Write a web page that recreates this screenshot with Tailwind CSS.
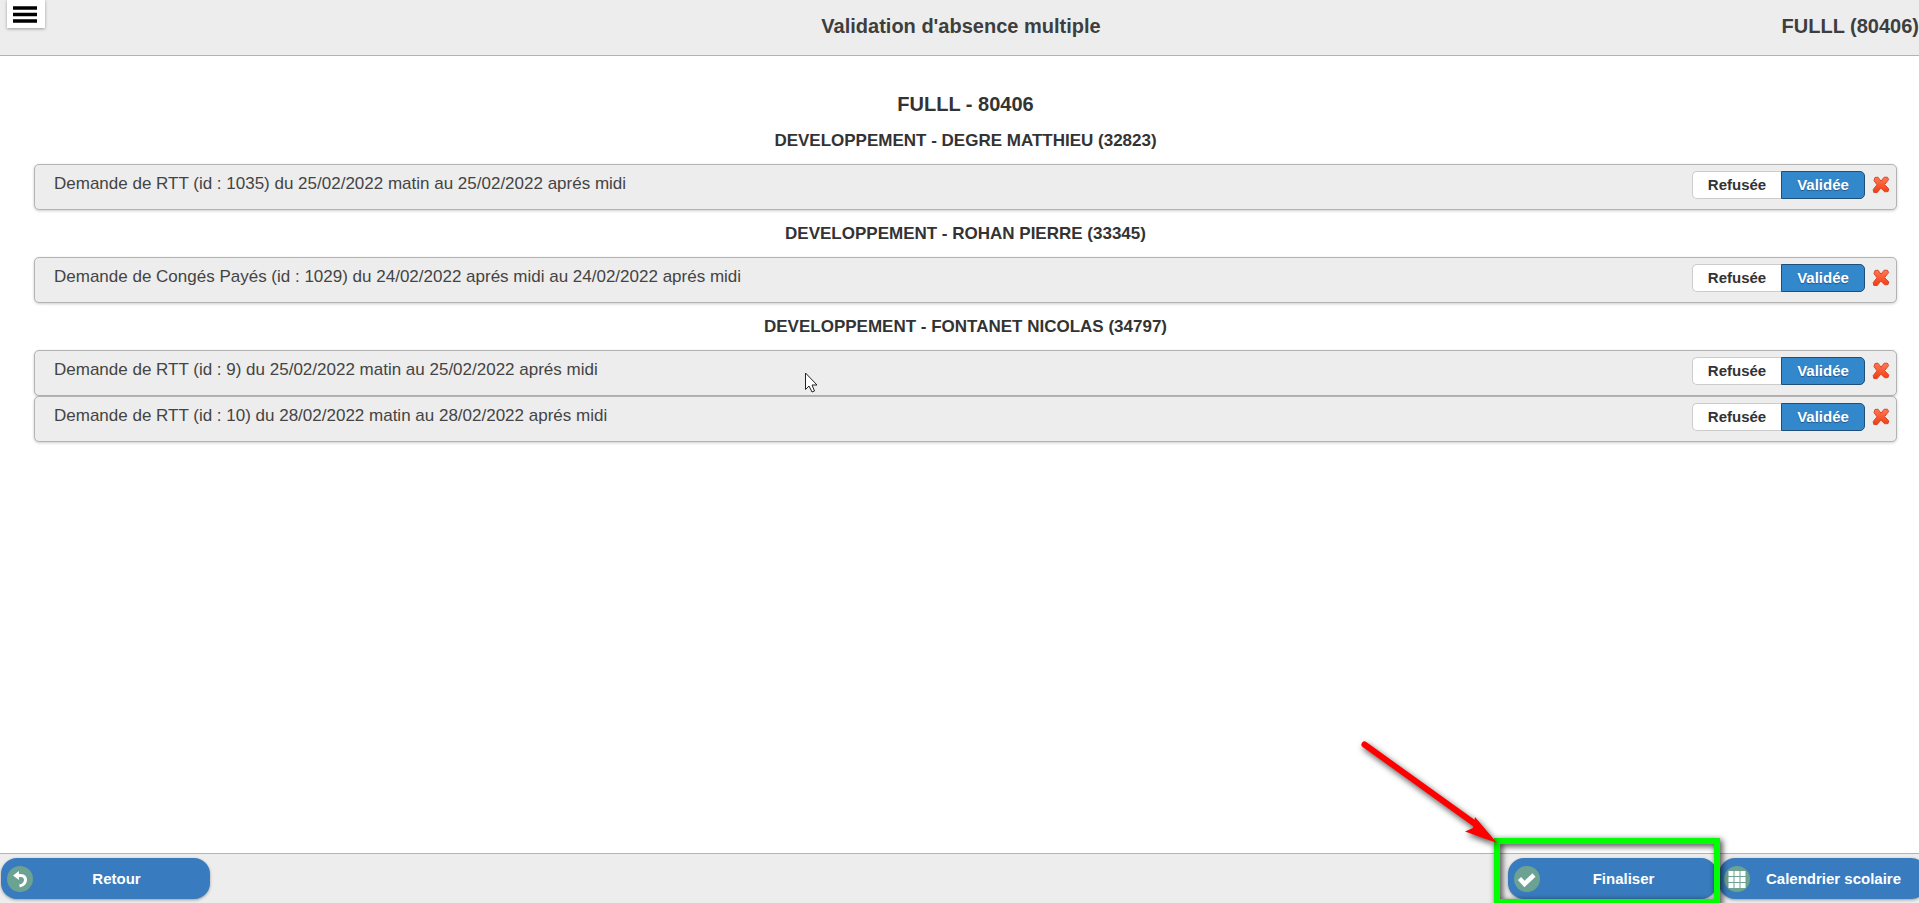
<!DOCTYPE html>
<html lang="fr">
<head>
<meta charset="utf-8">
<title>Validation d'absence multiple</title>
<script src="https://cdn.jsdelivr.net/npm/@tailwindcss/browser@4"></script>
</head>
<body class="relative flex h-screen flex-col overflow-hidden bg-white font-['Liberation_Sans',Arial,sans-serif] text-[#333333]">

<svg class="absolute size-0" aria-hidden="true">
  <defs>
    <linearGradient id="red" x1="0" y1="0" x2="0" y2="1"><stop offset="0" stop-color="#ff7a55"/><stop offset="1" stop-color="#f23c10"/></linearGradient>
    <symbol id="cross" viewBox="0 0 18 18">
      <path d="M3 1.500L6 1.200L9 5.200L12.200 1.200L15.500 1.300L16.600 3.600L12.600 8.600L16.800 13L16 15.600L12.600 15.800L8.800 12L5.200 16.600L1.800 16.400L1.200 13.600L5 8.800L2 4.600Z" fill="url(#red)" stroke="#d9472a" stroke-width="1" stroke-linejoin="round"/>
    </symbol>
  </defs>
</svg>

<header class="flex h-14 shrink-0 items-start border-b border-[#b3b3b3] bg-[#ededed]">
  <div class="flex flex-1 pl-[7px]">
    <button type="button" aria-label="Menu" class="flex h-7 w-[38px] items-center bg-white pl-1.5 shadow-[0_1px_3px_rgba(0,0,0,0.35)]">
      <svg width="24" height="17" viewBox="0 0 24 17"><path d="M0 2h24M0 8.500h24M0 15h24" stroke="#000" stroke-width="3.600"/></svg>
    </button>
  </div>
  <h1 class="pt-3 pr-1 text-xl leading-7 font-bold text-[#3e3e3e]">Validation d'absence multiple</h1>
  <div class="flex-1 pt-3 text-right text-xl leading-7 font-bold whitespace-nowrap text-[#3e3e3e]">FULLL (80406)</div>
</header>

<main class="flex-1 pt-8 pr-[22px] pl-[34px]">
  <h2 class="py-0.5 text-center text-xl leading-7 font-bold">FULLL - 80406</h2>

  <section>
    <h3 class="pt-[9px] pb-[11px] text-center text-[17px] leading-6 font-bold">DEVELOPPEMENT - DEGRE MATTHIEU (32823)</h3>
    <div class="flex h-[46px] items-start rounded-[5px] border border-[#b3b3b3] bg-[#ededed] pt-1.5 pr-1.5 pl-[19px] shadow-[0_1px_3px_rgba(0,0,0,0.2)]">
      <p class="flex-1 pt-px text-[17px] leading-6 text-[#444444]">Demande de RTT (id : 1035) du 25/02/2022 matin au 25/02/2022 aprés midi</p>
      <div class="flex h-7 text-[15px] font-bold">
        <button type="button" class="w-[89px] rounded-l-[5px] border border-r-0 border-[#cccccc] bg-white">Refusée</button>
        <button type="button" class="w-[84px] rounded-r-[5px] border border-[#1f4f79] bg-[#3388cc] text-white [text-shadow:0_1px_1px_#225588]">Validée</button>
      </div>
      <button type="button" aria-label="Supprimer" class="ml-[7px] flex h-7 items-center"><svg class="size-[18px]"><use href="#cross"/></svg></button>
    </div>
  </section>

  <section>
    <h3 class="py-[11px] pt-3 text-center text-[17px] leading-6 font-bold">DEVELOPPEMENT - ROHAN PIERRE (33345)</h3>
    <div class="flex h-[46px] items-start rounded-[5px] border border-[#b3b3b3] bg-[#ededed] pt-1.5 pr-1.5 pl-[19px] shadow-[0_1px_3px_rgba(0,0,0,0.2)]">
      <p class="flex-1 pt-px text-[17px] leading-6 text-[#444444]">Demande de Congés Payés (id : 1029) du 24/02/2022 aprés midi au 24/02/2022 aprés midi</p>
      <div class="flex h-7 text-[15px] font-bold">
        <button type="button" class="w-[89px] rounded-l-[5px] border border-r-0 border-[#cccccc] bg-white">Refusée</button>
        <button type="button" class="w-[84px] rounded-r-[5px] border border-[#1f4f79] bg-[#3388cc] text-white [text-shadow:0_1px_1px_#225588]">Validée</button>
      </div>
      <button type="button" aria-label="Supprimer" class="ml-[7px] flex h-7 items-center"><svg class="size-[18px]"><use href="#cross"/></svg></button>
    </div>
  </section>

  <section>
    <h3 class="py-[11px] pt-3 text-center text-[17px] leading-6 font-bold">DEVELOPPEMENT - FONTANET NICOLAS (34797)</h3>
    <div class="flex h-[46px] items-start rounded-[5px] border border-[#b3b3b3] bg-[#ededed] pt-1.5 pr-1.5 pl-[19px] shadow-[0_1px_3px_rgba(0,0,0,0.2)]">
      <p class="flex-1 pt-px text-[17px] leading-6 text-[#444444]">Demande de RTT (id : 9) du 25/02/2022 matin au 25/02/2022 aprés midi</p>
      <div class="flex h-7 text-[15px] font-bold">
        <button type="button" class="w-[89px] rounded-l-[5px] border border-r-0 border-[#cccccc] bg-white">Refusée</button>
        <button type="button" class="w-[84px] rounded-r-[5px] border border-[#1f4f79] bg-[#3388cc] text-white [text-shadow:0_1px_1px_#225588]">Validée</button>
      </div>
      <button type="button" aria-label="Supprimer" class="ml-[7px] flex h-7 items-center"><svg class="size-[18px]"><use href="#cross"/></svg></button>
    </div>
    <div class="flex h-[46px] items-start rounded-[5px] border border-[#b3b3b3] bg-[#ededed] pt-1.5 pr-1.5 pl-[19px] shadow-[0_1px_3px_rgba(0,0,0,0.2)]">
      <p class="flex-1 pt-px text-[17px] leading-6 text-[#444444]">Demande de RTT (id : 10) du 28/02/2022 matin au 28/02/2022 aprés midi</p>
      <div class="flex h-7 text-[15px] font-bold">
        <button type="button" class="w-[89px] rounded-l-[5px] border border-r-0 border-[#cccccc] bg-white">Refusée</button>
        <button type="button" class="w-[84px] rounded-r-[5px] border border-[#1f4f79] bg-[#3388cc] text-white [text-shadow:0_1px_1px_#225588]">Validée</button>
      </div>
      <button type="button" aria-label="Supprimer" class="ml-[7px] flex h-7 items-center"><svg class="size-[18px]"><use href="#cross"/></svg></button>
    </div>
  </section>
</main>

<footer class="flex h-[50px] shrink-0 items-start border-t border-[#b3b3b3] bg-[#ededed] pt-1 pl-px">
  <button type="button" class="flex h-[41px] w-[209px] items-center rounded-[16px] bg-[#387bbe] pl-1.5 text-[15px] font-bold text-white shadow-[0_1px_3px_rgba(0,0,0,0.35)]">
    <svg width="26" height="26" viewBox="0 0 26 26"><circle cx="13" cy="13" r="13" fill="#6ba292"/><path d="M11 9.500h3c6 0 6.500 8.500-1.500 10.500" fill="none" stroke="#fff" stroke-width="3"/><path d="M6 9.500L12 5v9z" fill="#fff"/></svg>
    <span class="flex-1 pt-px pr-2.5">Retour</span>
  </button>
  <button type="button" class="ml-auto flex h-[41px] w-[209px] items-center rounded-[16px] bg-[#387bbe] pl-1.5 text-[15px] font-bold text-white shadow-[0_1px_3px_rgba(0,0,0,0.35)]">
    <svg width="26" height="26" viewBox="0 0 26 26"><circle cx="13" cy="13" r="13" fill="#6ba292"/><path d="M5.500 12.500l5 5.500L20 9" fill="none" stroke="#fff" stroke-width="4.500"/></svg>
    <span class="flex-1 pt-px pr-2.5">Finaliser</span>
  </button>
  <button type="button" class="-mr-2 ml-0.5 flex h-[41px] w-[208px] items-center rounded-[16px] bg-[#387bbe] pl-[5px] text-[15px] font-bold text-white shadow-[0_1px_3px_rgba(0,0,0,0.35)]">
    <svg width="26" height="26" viewBox="0 0 26 26"><circle cx="13" cy="13" r="13" fill="#6ba292"/><path d="M4.500 5h5v5h-5zM10.500 5h5v5h-5zM16.500 5h5v5h-5zM4.500 11h5v5h-5zM10.500 11h5v5h-5zM16.500 11h5v5h-5zM4.500 17h5v5h-5zM10.500 17h5v5h-5zM16.500 17h5v5h-5z" fill="#fff"/></svg>
    <span class="flex-1 pt-px pr-2.5">Calendrier scolaire</span>
  </button>
</footer>

<div class="pointer-events-none absolute right-[199px] -bottom-[2px] h-[67px] w-[226px] border-[6px] border-[#00ff00] [filter:drop-shadow(2px_2px_3px_rgba(0,0,0,0.8))]"></div>
<svg class="pointer-events-none absolute right-[419px] bottom-[50px] overflow-visible [filter:drop-shadow(2px_3px_3px_rgba(0,0,0,0.7))]" width="140" height="113" viewBox="0 0 140 113" aria-hidden="true">
  <path d="M4.500 4.500L118 86" stroke="#ff0000" stroke-width="6" stroke-linecap="round"/><path d="M137 103L105 91.500L113 88L115 77Z" fill="#ff0000"/>
</svg>
<svg class="pointer-events-none absolute top-[372px] left-[805px]" width="13" height="21" viewBox="0 0 13 21" aria-hidden="true"><path d="M.5 1v16.500l3.500-3.500 3 6 2.500-1-2.500-6h5z" fill="#fff" stroke="#222" stroke-linejoin="round"/></svg>
</body>
</html>
